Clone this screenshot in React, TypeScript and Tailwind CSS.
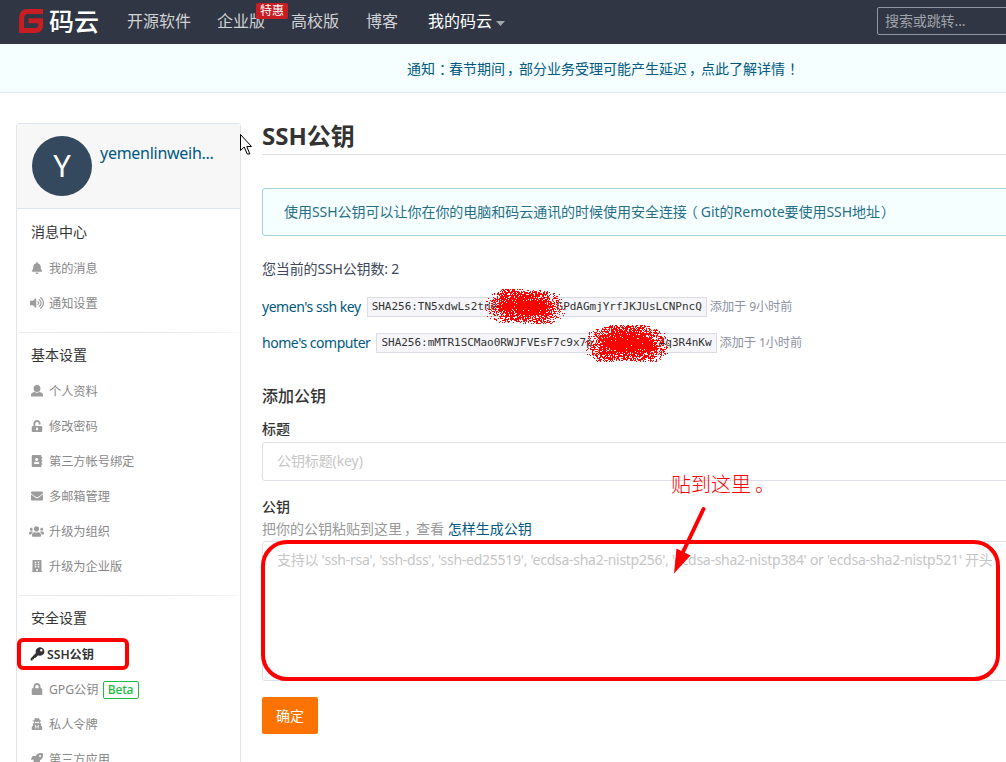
import React from "react";
import {
  FaBell, FaVolumeUp, FaUnlockAlt, FaAddressBook, FaEnvelope, FaUsers,
  FaBuilding, FaLock, FaUserSecret, FaRocket,
} from "react-icons/fa";

type Item = { icon: React.ReactNode; label: string; active?: boolean; beta?: boolean };
type Section = { title: string; items: Item[] };

function UserIcon() {
  return (
    <svg width="12" height="12" viewBox="0 0 12 12" fill="currentColor" aria-hidden="true">
      <ellipse cx="6" cy="3.500" rx="3.400" ry="3.500" />
      <path d="M3.400 6.800C4.800 8.200 7.200 8.200 8.600 6.800L11 8Q12 8.600 12 10.200V11.500H0V10.200Q0 8.600 1 8Z" />
    </svg>
  );
}

function KeyIcon() {
  return (
    <svg width="15" height="14" viewBox="0 0 15 14" fill="currentColor" aria-hidden="true">
      <path
        fillRule="evenodd"
        d="M10 .3A4.300 4.300 0 0 0 5.900 6L.6 11.400V13.600H2.600V12.300H4V11H5.300L8.200 8.200A4.200 4.200 0 1 0 10 .3ZM11.300 2.100A1.200 1.200 0 1 1 11.300 4.500A1.200 1.200 0 1 1 11.300 2.100Z"
      />
    </svg>
  );
}

const sections: Section[] = [
  {
    title: "消息中心",
    items: [
      { icon: <FaBell size={12} />, label: "我的消息" },
      { icon: <FaVolumeUp size={14} />, label: "通知设置" },
    ],
  },
  {
    title: "基本设置",
    items: [
      { icon: <UserIcon />, label: "个人资料" },
      { icon: <FaUnlockAlt size={12} />, label: "修改密码" },
      { icon: <FaAddressBook size={12} />, label: "第三方帐号绑定" },
      { icon: <FaEnvelope size={12} />, label: "多邮箱管理" },
      { icon: <FaUsers size={15} />, label: "升级为组织" },
      { icon: <FaBuilding size={12} />, label: "升级为企业版" },
    ],
  },
  {
    title: "安全设置",
    items: [
      { icon: <KeyIcon />, label: "SSH公钥", active: true },
      { icon: <FaLock size={12} />, label: "GPG公钥", beta: true },
      { icon: <FaUserSecret size={12} />, label: "私人令牌" },
      { icon: <FaRocket size={12} />, label: "第三方应用" },
    ],
  },
];

// Airbrush: a round nozzle moved from left to right, leaving single-pixel dots.
function sprayPath(seed: number, w: number, h: number, count: number) {
  let s = seed;
  const rnd = () => {
    s = (Math.imul(s, 1664525) + 1013904223) >>> 0;
    return s / 4294967296;
  };
  const radius = h / 2;
  let d = "";
  for (let i = 0; i < count; i++) {
    const t = rnd();
    const a = rnd() * Math.PI * 2;
    const r = radius * Math.pow(rnd(), 0.9);
    const cx = radius + t * (w - h);
    const cy = radius + Math.sin(t * 6 + seed) * 1.5;
    d += `M${Math.floor(cx + Math.cos(a) * r)} ${Math.floor(cy + Math.sin(a) * r)}h1v1h-1z`;
  }
  return d;
}

function Spray({ seed, w, h, count, className }: { seed: number; w: number; h: number; count: number; className: string }) {
  return (
    <svg className={className} width={w} height={h} shapeRendering="crispEdges" aria-hidden="true">
      <path d={sprayPath(seed, w, h, count)} fill="#ff0000" />
    </svg>
  );
}

function Header() {
  return (
    <header className="flex h-11 items-center overflow-hidden bg-[#303643] pb-[2px] text-[16px] text-[#d0d2d6]">
      <div className="ml-[19px] flex w-[108px] items-center gap-[5px]">
        <svg width="25" height="24" viewBox="0 0 25 24" aria-hidden="true">
          <path d="M24 2.600H9Q2.600 2.600 2.600 9V21.400H16Q21.600 21.400 21.600 16V11.700H9.500" fill="none" stroke="#c71d23" strokeWidth="5" />
        </svg>
        <span className="text-[25px] font-medium leading-none text-white">码云</span>
      </div>
      <nav className="flex h-full items-center whitespace-nowrap">
        <a className="w-[90px]">开源软件</a>
        <a className="relative w-[74px]">
          企业版
          <span className="absolute -top-[6px] left-[39px] flex h-4 w-8 items-center justify-center rounded-[2px] bg-[#c71d23] text-[12px] leading-none text-white">特惠</span>
        </a>
        <a className="w-[75px]">高校版</a>
        <a className="w-[62px]">博客</a>
        <a className="flex items-center gap-1 text-white">
          我的码云
          <svg width="9" height="5" className="mt-[5px]" aria-hidden="true"><path d="M0 0h9L4.500 5z" fill="#a4a7ad" /></svg>
        </a>
      </nav>
      <div className="-mr-5 ml-auto flex h-7 w-[149px] shrink-0 items-center rounded-[2px] border border-[#9195a0] pb-px pl-[7px] text-[14px] tracking-[-0.1px] text-[#a0a3aa]">搜索或跳转...</div>
    </header>
  );
}

function Sidebar() {
  return (
    <aside className="mt-[30px] h-[700px] w-[225px] shrink-0 rounded-t-[3px] border border-[#dfe6ed]">
      <div className="flex h-[85px] border-b border-[#dfe6ed] bg-[#f7f7f7] pl-[15px] pt-3">
        <div className="flex size-[60px] items-center justify-center rounded-full bg-[#34495e] pb-[2px] font-['Noto_Sans'] text-[31px] text-white">Y</div>
        <span className="ml-2 mt-[5px] text-[16px] leading-6 tracking-[-0.27px] text-[#005980]">yemenlinweih...</span>
      </div>
      {sections.map((section, i) => (
        <section key={section.title} className={i === 0 ? "pt-px" : ""}>
          {i > 0 && <div className="mx-px mt-[11px] h-px bg-linear-to-r from-[#ededed] via-[#e4e4e4] to-[#f6f6f6]" />}
          <h3 className="h-[41px] pl-[14px] text-[14px] leading-[44px] text-[#333]">{section.title}</h3>
          {section.items.map((item) => (
            <div key={item.label} className={`relative flex h-[35px] items-center text-[12.2px] ${item.active ? "font-semibold text-[#333]" : "text-[#888]"}`}>
              <span className={`ml-3 flex w-4 justify-center pb-px ${item.active ? "mr-[2px] text-[#333]" : "mr-1 pr-px text-[#9c9c9c]"}`}>{item.icon}</span>
              <span className="pt-[2px]">{item.label}</span>
              {item.beta && <span className="ml-1 flex h-[18px] w-9 items-center justify-center rounded-[2px] border border-[#21ba45] text-[12px] font-medium tracking-[-0.2px] text-[#21ba45]">Beta</span>}
              {item.active && <span className="absolute left-0 top-px h-[32px] w-[112px] rounded-[6px] border-4 border-[#ff0000]" />}
            </div>
          ))}
        </section>
      ))}
    </aside>
  );
}

function KeyRow({ name, print, age, children }: { name: string; print: string; age: string; children: React.ReactNode }) {
  return (
    <div className="relative flex h-9 items-center whitespace-nowrap">
      <span className="text-[14px] tracking-[-0.46px] text-[#005980]">{name}</span>
      <code className="ml-[6px] mt-[2px] flex h-5 items-center whitespace-pre border border-[#dcdce4] bg-[#f6f6fa] px-1 font-['DejaVu_Sans_Mono',monospace] text-[11px] tracking-[-0.02px] text-[#333]">{print}</code>
      <span className="ml-[3px] mt-[2px] text-[12.2px] tracking-[-0.1px] text-[#8c92a4]">添加于 {age}</span>
      {children}
    </div>
  );
}

function Shift({ children, className }: { children: React.ReactNode; className: string }) {
  return <span className={`relative ${className}`}>{children}</span>;
}

export default function App() {
  return (
    <div className="relative h-[762px] w-[1006px] overflow-hidden bg-white font-['Noto_Sans','Noto_Sans_CJK_SC',sans-serif]">
      <Header />
      <div className="flex h-[49px] items-center border-b border-[#dfe6ed] bg-[#f6ffff] pl-[407px] text-[14px] text-[#005980]">
        <p>
          通知<Shift className="left-1">：</Shift>春节期间<Shift className="left-[2px]">，</Shift>部分业务受理可能产生延迟<Shift className="left-[2px]">，</Shift>点此了解详情<Shift className="left-1">！</Shift>
        </p>
      </div>
      <div className="flex pl-4">
        <Sidebar />
        <main className="ml-[21px] w-[760px] shrink-0 text-[14px] text-[#333]">
          <h1 className="mt-6 h-[38px] border-b border-[#dededf] text-[24px] font-bold leading-[38px]">SSH公钥</h1>
          <div className="mt-[33px] flex h-12 items-center rounded-[3px] border border-[#a3d3de] bg-[#f6ffff] pb-[2px] pl-[21px] text-[#276f86]">
            <p className="tracking-[-0.03px]">
              使用SSH公钥可以让你在你的电脑和码云通讯的时候使用安全连接<Shift className="-left-[3px]">（</Shift>Git的Remote要使用SSH地址<Shift className="left-px">）</Shift>
            </p>
          </div>
          <p className="mt-[23px] h-5 leading-5 tracking-[-0.15px] text-[#40485b]">您当前的SSH公钥数: 2</p>
          <div className="mt-[9px]">
            <KeyRow name="yemen's ssh key" print="SHA256:TN5xdwLs2tne         GPdAGmjYrfJKJUsLCNPncQ" age="9小时前">
              <Spray seed={3} w={82} h={35} count={3600} className="absolute left-[222px] top-px" />
            </KeyRow>
            <KeyRow name="home's computer" print="SHA256:mMTR1SCMao0RWJFVEsF7c9x7p          4q3R4nKw" age="1小时前">
              <Spray seed={8} w={86} h={37} count={4600} className="absolute left-[322px] top-px" />
            </KeyRow>
          </div>
          <h2 className="mt-[24px] h-6 text-[16px] font-medium leading-6">添加公钥</h2>
          <label className="mt-[11px] block h-5 font-medium leading-5">标题</label>
          <div className="mt-[3px] flex h-[39px] items-center rounded-[3px] border border-[#dfdfe8] pb-[2px] pl-[14px] tracking-[-0.1px] text-[#c6c6c6]">公钥标题(key)</div>
          <label className="mt-4 block h-5 font-medium leading-5">公钥</label>
          <p className="mt-[2px] h-5 leading-5 text-[#999]">把你的公钥粘贴到这里<Shift className="left-[2px]">，</Shift>查看 <a className="text-[#005980]">怎样生成公钥</a></p>
          <div className="mt-[2px] h-[140px] whitespace-nowrap rounded-[3px] border border-[#dfdfe8] pl-[14px] pt-2 leading-5 tracking-[-0.265px] text-[#c6c6c6]">支持以 'ssh-rsa', 'ssh-dss', 'ssh-ed25519', 'ecdsa-sha2-nistp256', 'ecdsa-sha2-nistp384' or 'ecdsa-sha2-nistp521' 开头</div>
          <button className="mt-4 block h-[37px] w-14 rounded-[2px] bg-[#fe7300] text-[14px] text-white">确定</button>
        </main>
      </div>
      <div className="absolute left-[261px] top-[540px] h-[141px] w-[739px] rounded-[26px] border-4 border-[#ff0000]" />
      <span className="absolute left-[671px] top-[471px] text-[20px] font-light leading-7 text-[#ff0000]">贴到这里<Shift className="left-1">。</Shift></span>
      <svg className="absolute left-[670px] top-[504px]" width="40" height="72" aria-hidden="true">
        <path d="M33.500 5L13 48" stroke="#ff0000" strokeWidth="4" strokeLinecap="round" />
        <path d="M4 69.500L6.500 44.500L20.500 51.500Z" fill="#ff0000" />
      </svg>
      <svg className="absolute left-[240px] top-[133px]" width="13" height="22" aria-hidden="true">
        <path d="M.5 1.500V17.500L4.200 14L7.200 21H9.800L6.800 13.500H11.500Z" fill="#fff" stroke="#000" />
      </svg>
    </div>
  );
}
